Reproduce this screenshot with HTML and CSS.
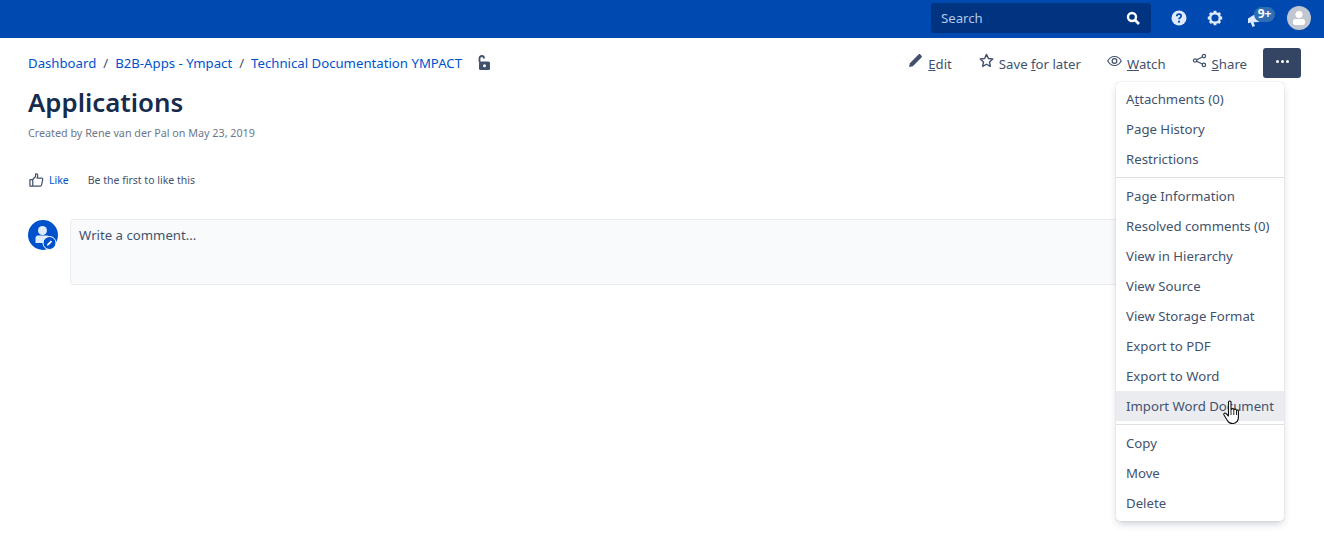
FILE: index.html
```html
<!DOCTYPE html>
<html lang="en">
<head>
<meta charset="utf-8">
<title>Applications</title>
<link rel="stylesheet" href="styles.css">
</head>
<body>
<header class="topbar">
  <div class="search"><span class="search-label">Search</span>
    <svg class="search-icon" viewBox="0 0 14 14"><circle cx="6" cy="6" r="4" fill="none" stroke="#fff" stroke-width="2.4"/><path d="M9 9l4 4" stroke="#fff" stroke-width="2.6"/></svg>
  </div>
  <svg class="top-icon" viewBox="0 0 16 16"><circle cx="8" cy="8" r="7.5" fill="#deebff"/><path d="M5.8 6.2C5.9 4.9 6.8 4.2 8 4.2c1.300 0 2.200.8 2.200 1.900 0 1.700-2.200 1.600-2.200 3.200" fill="none" stroke="#0049b0" stroke-width="1.700"/><circle cx="8" cy="11.700" r="1.100" fill="#0049b0"/></svg>
  <svg class="top-icon gear" viewBox="0 0 16 16"><circle cx="8" cy="8" r="4.800" fill="none" stroke="#deebff" stroke-width="2.400"/><path d="M8 .8v2.500M8 12.700v2.500M.8 8h2.500M12.700 8h2.500M2.900 2.900l1.800 1.800M11.300 11.300l1.800 1.800M13.100 2.900l-1.800 1.800M4.700 11.300l-1.800 1.800" stroke="#deebff" stroke-width="2.800"/></svg>
  <div class="notify">
    <svg class="bell" viewBox="0 0 14 14"><path d="M1 5.500L9 .5l3.500 8.500-6 .3 1.500 3.700-2.500 1-1.800-4.500-2.700.8z" fill="#deebff"/></svg>
    <span class="badge">9+</span>
  </div>
  <svg class="avatar" viewBox="0 0 24 24"><circle cx="12" cy="12" r="12" fill="#c1c7d0"/><circle cx="12" cy="8.500" r="3.500" fill="#fff"/><path d="M6 15c0-1 1-2 2-2h8c1 0 2 1 2 2v2c0 1-1 2-2 2H8c-1 0-2-1-2-2z" fill="#fff"/></svg>
</header>

<main class="page">
  <div class="top-row">
    <nav class="crumbs">
      <a class="link">Dashboard</a><span class="slash">/</span>
      <a class="link">B2B-Apps - Ympact</a><span class="slash">/</span>
      <a class="link">Technical Documentation YMPACT</a>
      <svg class="lock" viewBox="0 0 14 16"><path d="M2.500 7V3.500C2.500 2 3.500 1 4.800 1S7 2 7 3.500" fill="none" stroke="#42526e" stroke-width="1.800"/><rect x="2" y="6.500" width="11" height="8.500" rx="1.500" fill="#42526e"/><circle cx="7.500" cy="10.700" r="1.500" fill="#fff"/></svg>
    </nav>
    <div class="actions">
      <a class="action">
        <svg class="act-icon" viewBox="0 0 14 14"><path d="M1 13l.7-3.500L9.800 1.400c.5-.5 1.200-.5 1.700 0l1.100 1.100c.5.500.5 1.200 0 1.700L4.500 12.300z" fill="#42526e"/></svg>
        <span><u>E</u>dit</span></a>
      <a class="action action-tight">
        <svg class="act-icon" viewBox="0 0 16 16"><path d="M8 1.500l2 4.300 4.700.6-3.500 3.200.9 4.700L8 12l-4.100 2.300.9-4.700L1.300 6.400 6 5.800z" fill="none" stroke="#42526e" stroke-width="1.500" stroke-linejoin="round"/></svg>
        <span>Save <u>f</u>or later</span></a>
      <a class="action action-tight">
        <svg class="act-icon eye" viewBox="0 0 16 12"><path d="M.8 6C2.500 2.800 5 1.200 8 1.200S13.500 2.800 15.200 6C13.500 9.200 11 10.800 8 10.800S2.500 9.200.8 6z" fill="none" stroke="#42526e" stroke-width="1.200"/><circle cx="8" cy="6" r="2.500" fill="none" stroke="#42526e" stroke-width="1.300"/></svg>
        <span><u>W</u>atch</span></a>
      <a class="action">
        <svg class="act-icon" viewBox="0 0 16 16"><path d="M12.500 3.500L3.500 8l9 4.500" fill="none" stroke="#42526e" stroke-width="1.300"/><circle cx="12.700" cy="3.300" r="1.800" fill="#fff" stroke="#42526e" stroke-width="1.300"/><circle cx="3.300" cy="8" r="1.800" fill="#fff" stroke="#42526e" stroke-width="1.300"/><circle cx="12.700" cy="12.700" r="1.800" fill="#fff" stroke="#42526e" stroke-width="1.300"/></svg>
        <span><u>S</u>hare</span></a>
      <button class="more" type="button" aria-label="More"><i></i><i></i><i></i></button>
    </div>
  </div>

  <h1 class="title">Applications</h1>
  <p class="byline">Created by Rene van der Pal on May 23, 2019</p>

  <div class="likes">
    <svg class="thumb" viewBox="0 0 16 16"><path d="M1 7.500h3v7H1zM4 7.500l3-3.200V1.800c0-.7 2-.7 2.300.8.200 1-.2 2.400-.7 3.400h4.900c.8 0 1.300.7 1.100 1.500l-1.200 5.700c-.2.700-.7 1.300-1.500 1.300H4" fill="none" stroke="#42526e" stroke-width="1.300" stroke-linejoin="round"/></svg>
    <a class="like-link">Like</a>
    <span class="like-note">Be the first to like this</span>
  </div>

  <div class="comment">
    <svg class="comment-avatar" viewBox="0 0 30 30"><circle cx="15" cy="15" r="15" fill="#0052cc"/><circle cx="14.500" cy="10.500" r="4.500" fill="#deebff"/><path d="M7.500 18c0-1.500 1-2.500 2.500-2.500h9c1.500 0 2.500 1 2.500 2.500v5h-14z" fill="#deebff"/><circle cx="21.500" cy="23" r="6.500" fill="#0052cc" stroke="#fff" stroke-width="1"/><path d="M18.800 25.700l.5-1.800 3.500-3.500 1.300 1.300-3.500 3.500z" fill="#fff"/></svg>
    <div class="comment-box">Write a comment...</div>
  </div>
</main>

<div class="menu">
  <ul class="group">
    <li class="item">A<u>t</u>tachments (0)</li>
    <li class="item">Page History</li>
    <li class="item">Restrictions</li>
  </ul>
  <ul class="group">
    <li class="item">Page Information</li>
    <li class="item">Resolved comments (0)</li>
    <li class="item">View in Hierarchy</li>
    <li class="item">View Source</li>
    <li class="item">View Storage Format</li>
    <li class="item">Export to PDF</li>
    <li class="item">Export to Word</li>
    <li class="item item-hover">Import Word Document</li>
  </ul>
  <ul class="group">
    <li class="item">Copy</li>
    <li class="item">Move</li>
    <li class="item">Delete</li>
  </ul>
</div>
<svg class="cursor" viewBox="0 0 17 25"><path d="M5.500 2c0-1.300 2.500-1.300 2.500 0v7.500l.4-.1c0-1 2.200-1 2.300 0l.3.300c.2-.8 2.100-.8 2.200.2l.2.500c.4-.6 2-.4 2 .7v5.900c0 3.600-2 6-5 6.500-3 .3-5-1-6-3L1 15c-.7-1.500 1-2.700 2-1.500l2.500 2.500z" fill="#fff" stroke="#111" stroke-width="1.100" stroke-linejoin="round"/><path d="M8 10v5M10.800 10v5M13.500 11v4" stroke="#111" stroke-width=".9"/></svg>
</body>
</html>
```
FILE: styles.css
```css
* { box-sizing: border-box; }
html, body { margin: 0; height: 536px; overflow: hidden; }
body {
  position: relative;
  background: #fff;
  color: #172b4d;
  font-family: "Noto Sans", "Open Sans", "Liberation Sans", sans-serif;
  font-size: 13.2px;
}
.topbar {
  height: 38px;
  background: #0049b0;
  display: flex;
  align-items: center;
  justify-content: flex-end;
  padding: 0 13px 2px 0;
}
.search {
  width: 220px;
  height: 30px;
  background: #003380;
  border-radius: 3px;
  display: flex;
  align-items: center;
  justify-content: space-between;
  padding: 0 11px 0 10px;
  margin-right: 20px;
}
.search-label { color: #b3c9ea; font-size: 13.2px; }
.search-icon { width: 14px; height: 14px; }
.top-icon { width: 16px; height: 16px; margin-right: 20px; }
.notify { position: relative; width: 36px; height: 20px; margin: 0 4px 0 4px; }
.bell { position: absolute; left: 0; top: 5px; width: 14px; height: 14px; }
.badge {
  position: absolute;
  left: 7px;
  top: -1px;
  width: 21px;
  height: 15px;
  border-radius: 8px;
  background: #2f6db5;
  color: #fff;
  font-size: 12px;
  font-weight: 700;
  line-height: 14px;
  text-align: center;
}
.avatar { width: 24px; height: 24px; }
.page { padding: 0 23px 0 28px; }
.top-row {
  height: 50px;
  display: flex;
  align-items: center;
  justify-content: space-between;
}
.crumbs { display: flex; align-items: center; }
.link { color: #0052cc; }
.slash { color: #42526e; margin: 0 7px; }
.lock { width: 14px; height: 16px; margin-left: 15px; }
.actions { display: flex; align-items: center; }
.action {
  display: flex;
  align-items: center;
  color: #42526e;
  margin-right: 27px;
  gap: 5px;
}
.action-tight { margin-right: 26px; }
.action span { padding-top: 1px; }
.act-icon { width: 15px; height: 15px; margin-top: -5px; }
.eye { height: 12px; }
.more {
  width: 38px;
  height: 30px;
  margin-left: -11px;
  border: 0;
  border-radius: 3px;
  background: #344563;
  display: flex;
  align-items: center;
  justify-content: center;
  gap: 2px;
  padding: 0;
}
.more i { width: 3px; height: 3px; border-radius: 50%; background: #fff; margin-bottom: 3px; }
.title {
  margin: -2px 0 0;
  font-size: 25.8px;
  font-weight: 600;
  line-height: 32px;
  color: #172b4d;
}
.byline { margin: 7px 0 0; font-size: 10.75px; line-height: 16px; color: #6b778c; }
.likes { display: flex; align-items: center; margin-top: 29px; height: 20px; font-size: 10.5px; }
.thumb { width: 15px; height: 16px; margin-left: 1px; }
.like-link { color: #0052cc; margin-left: 5px; }
.like-note { color: #42526e; margin-left: 19px; }
.comment { display: flex; margin-top: 29px; margin-right: 40px; gap: 12px; }
.comment-avatar { width: 30px; height: 30px; flex: none; margin-top: 1px; }
.comment-box {
  flex: 1;
  height: 66px;
  background: #f9fafc;
  border: 1px solid #e9ebef;
  border-radius: 3px;
  padding: 6px 8px;
  color: #42526e;
}
.menu {
  position: absolute;
  left: 1116px;
  top: 82px;
  width: 168px;
  height: 439px;
  background: #fff;
  border-radius: 4px;
  box-shadow: 0 4px 8px -2px rgba(9,30,66,.25), 0 0 1px rgba(9,30,66,.31);
}
.group { list-style: none; margin: 0; padding: 2px 0 3px; border-top: 1px solid #dfe1e6; }
.group + .group { padding-top: 3px; }
.group:first-child { border-top: 0; }
.item {
  height: 30px;
  line-height: 30px;
  padding: 0 10px;
  color: #42526e;
  white-space: nowrap;
}
.item-hover { background: #ebecf0; }
.cursor { position: absolute; left: 1223px; top: 400px; width: 17px; height: 25px; }
```
